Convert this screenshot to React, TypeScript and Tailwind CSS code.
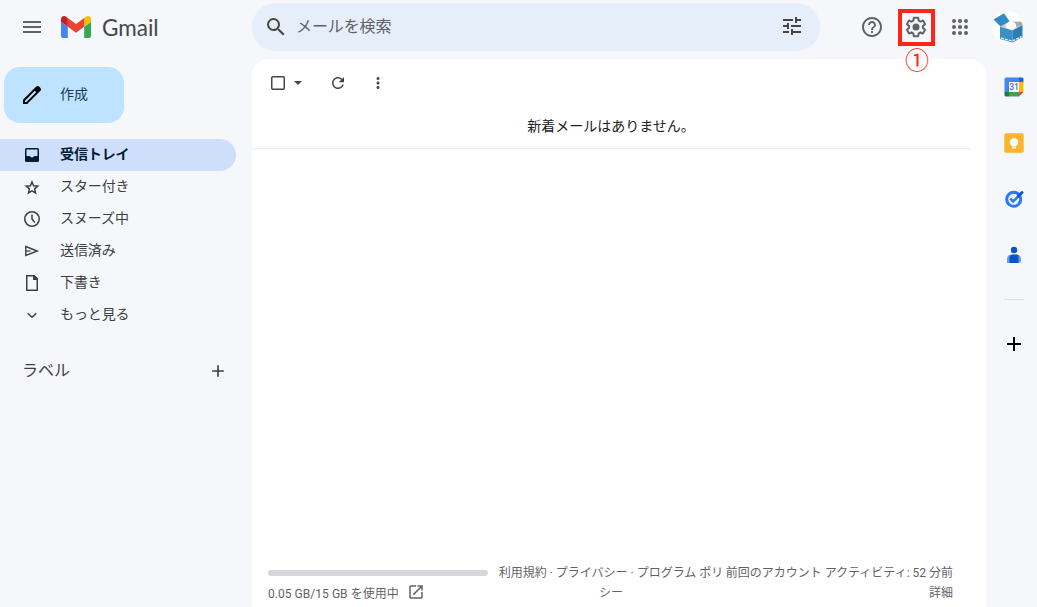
import type { ReactNode } from 'react';
import {
  MdAdd, MdHelpOutline, MdMenu, MdMoreVert, MdOpenInNew, MdRefresh, MdSearch, MdTune,
} from 'react-icons/md';

function Icon20({ children }: { children: ReactNode }) {
  return <svg className="h-5 w-5 shrink-0" viewBox="0 0 20 20" fill="none" stroke="currentColor" strokeWidth="1.5">{children}</svg>;
}

const navItems: { label: string; active?: boolean; icon: ReactNode }[] = [
  {
    label: '受信トレイ', active: true,
    icon: <path fill="currentColor" stroke="none" fillRule="evenodd" d="M4.500 3h11A1.500 1.500 0 0 1 17 4.500v11a1.500 1.500 0 0 1-1.500 1.500h-11A1.500 1.500 0 0 1 3 15.500v-11A1.500 1.500 0 0 1 4.500 3zM4.500 4.500V11H7.700a2.600 2.600 0 0 0 4.600 0H15.500V4.500z" />,
  },
  { label: 'スター付き', icon: <path d="M10 5l1.620 3.800 4.130.36-3.130 2.720.94 4.040L10 13.780l-3.560 2.140.94-4.040-3.130-2.720 4.130-.36z" /> },
  { label: 'スヌーズ中', icon: <><circle cx="10" cy="10" r="7.250" /><path d="M10 5.500V10l2.800 3.400" /></> },
  { label: '送信済み', icon: <><path strokeWidth="1.400" d="M3.750 5.500L15.300 10 3.750 14.500z" /><path strokeWidth="1.300" d="M3.800 10H8.500" /></> },
  { label: '下書き', icon: <><path d="M5 2.750h7l3.250 3.250v11.250H4.750V2.750z" /><path fill="currentColor" stroke="none" d="M11 2h1.500L16 5.500V7h-5z" /></> },
  { label: 'もっと見る', icon: <path d="M5.700 8.200L10 12.300l4.300-4.100" /> },
];

function GmailMark() {
  return (
    <svg className="h-[22px] w-[30px]" viewBox="52 42 88 66" preserveAspectRatio="none">
      <path fill="#4285f4" d="M58 108h14V74L52 59v43c0 3.320 2.690 6 6 6" />
      <path fill="#34a853" d="M120 108h14c3.320 0 6-2.690 6-6V59l-20 15" />
      <path fill="#fbbc04" d="M120 48v26l20-15v-8c0-7.420-8.470-11.650-14.400-7.200" />
      <path fill="#ea4335" d="M72 74V48l24 18 24-18v26L96 92" />
      <path fill="#c5221f" d="M52 51v8l20 15V48l-5.600-4.200c-5.940-4.450-14.400-.22-14.400 7.200" />
    </svg>
  );
}

function Gear() {
  return (
    <svg className="h-6 w-6 shrink-0" viewBox="0 0 24 24" fill="currentColor">
      <path d="M13.850 22.250h-3.700c-.74 0-1.360-.54-1.450-1.270l-.27-1.890c-.27-.14-.53-.29-.79-.46l-1.800.72c-.7.26-1.470-.03-1.810-.65L2.200 15.530c-.35-.66-.2-1.440.36-1.880l1.530-1.190c-.01-.15-.02-.3-.02-.46 0-.15.01-.31.02-.46l-1.520-1.190c-.59-.45-.74-1.260-.37-1.880l1.850-3.190c.34-.62 1.110-.9 1.790-.63l1.810.73c.26-.17.52-.32.78-.46l.27-1.910c.09-.7.71-1.250 1.440-1.250h3.700c.74 0 1.360.54 1.450 1.270l.27 1.890c.27.14.53.29.79.46l1.800-.72c.71-.26 1.480.03 1.820.65l1.840 3.180c.36.66.2 1.440-.36 1.880l-1.520 1.190c.01.15.02.3.02.46s-.01.31-.02.46l1.520 1.190c.56.45.72 1.230.37 1.860l-1.860 3.220c-.34.62-1.110.9-1.800.63l-1.800-.72c-.26.17-.52.32-.78.46l-.27 1.910c-.1.68-.72 1.220-1.460 1.220zm-3.230-2h2.760l.37-2.550.53-.22c.44-.18.88-.44 1.340-.78l.45-.34 2.380.96 1.380-2.400-2.030-1.580.07-.56c.03-.26.06-.51.06-.78s-.03-.53-.06-.78l-.07-.56 2.030-1.580-1.390-2.400-2.390.96-.45-.35c-.42-.32-.87-.58-1.330-.77l-.52-.22-.37-2.550h-2.760l-.37 2.550-.53.21c-.44.19-.88.44-1.340.79l-.45.33-2.380-.95-1.390 2.390 2.030 1.580-.07.56a7 7 0 0 0-.06.79c0 .26.02.53.06.78l.07.56-2.030 1.580 1.380 2.400 2.390-.96.45.35c.43.33.86.58 1.330.77l.53.22.38 2.550z" />
      <circle cx="12" cy="12" r="3.500" />
    </svg>
  );
}

function AppsGrid() {
  const steps = [6, 12, 18];
  return (
    <svg className="h-6 w-6" viewBox="0 0 24 24" fill="currentColor">
      {steps.map((y) => steps.map((x) => <circle key={`${x}-${y}`} cx={x} cy={y} r="2" />))}
    </svg>
  );
}

function Avatar() {
  return (
    <svg className="h-8 w-8" viewBox="0 0 32 32">
      <circle cx="16" cy="16" r="16" fill="#fff" />
      <path fill="#d0d0d0" d="M8 15l7-4 15 2.500-9 6z" />
      <path fill="#a9a9a9" d="M14 11l15-.5 2 3-5 2.500-8-3z" />
      <ellipse cx="19" cy="14.500" rx="5.200" ry="4" fill="#fff" />
      <path fill="#318cc6" d="M1.500 8.500L12 2.200l5.500 8L8.500 15.500z" />
      <path fill="#3790c8" d="M8 15.500L20.500 19.500V31.500L8 28z" />
      <path fill="#2a7eb4" d="M20.500 19.500L30.500 14v12L20.500 31.500z" />
      <path stroke="#d9edf9" strokeWidth="1.300" strokeDasharray="3 1" d="M9 27l11.500 3 9-4.500" fill="none" />
    </svg>
  );
}

function Calendar() {
  return (
    <svg className="h-5 w-5" viewBox="0 0 20 20">
      <path fill="#4285f4" d="M2 .5h14V5H5v10H.5V2A1.500 1.500 0 0 1 2 .5z" />
      <path fill="#1967d2" d="M15 .5h3A1.500 1.500 0 0 1 19.500 2v3H15z" />
      <path fill="#fbbc04" d="M15 5h4.500v10H15z" />
      <path fill="#34a853" d="M5 15h10v4.500H5z" />
      <path fill="#188038" d="M.5 15H5v4.500H2A1.500 1.500 0 0 1 .5 18z" />
      <path fill="#ea4335" d="M15 15h4.500L15 19.500z" />
      <path fill="#fff" d="M5 5h10v10H5z" />
      <text x="10" y="13.200" textAnchor="middle" fill="#3274df" className="font-['Roboto'] text-[8.500px] font-medium">31</text>
    </svg>
  );
}

function Keep() {
  return (
    <svg className="h-5 w-5" viewBox="0 0 20 20">
      <rect x=".3" y=".3" width="19.400" height="19.400" rx="1.500" fill="#fbb52d" />
      <path fill="#fff" d="M10 5a4.200 4.200 0 0 0-2.300 7.700v.9h4.600v-.9A4.200 4.200 0 0 0 10 5zM8 14.300h4v1.300H8z" />
    </svg>
  );
}

function Tasks() {
  return (
    <svg className="h-5 w-5" viewBox="0 0 20 20" fill="none">
      <circle cx="9.700" cy="10.300" r="7" stroke="#2a7af1" strokeWidth="3" />
      <path d="M6.200 9.500l3 3 5-5" stroke="#2a7af1" strokeWidth="2.600" />
      <path d="M14.500 7l3.500-3.500" stroke="#0d55cf" strokeWidth="3" strokeLinecap="round" />
    </svg>
  );
}

function Contacts() {
  return (
    <svg className="h-5 w-5" viewBox="0 0 20 20">
      <circle cx="10" cy="5" r="3.200" fill="#0756c9" />
      <path fill="#669df6" d="M3 18v-4.500A4.500 4.500 0 0 1 7.500 9.500h5A4.500 4.500 0 0 1 17 13.500V16a2 2 0 0 1-2 2z" />
      <path fill="#0756c9" d="M5.500 18v-5a3.500 3.500 0 0 1 3.500-3.500h3a3 3 0 0 1 2.500 1.200V18z" />
    </svg>
  );
}

export default function App() {
  return (
    <div className="flex h-[607px] w-[1037px] flex-col overflow-hidden bg-[#f5f7fb] font-['Roboto','Noto_Sans_CJK_JP',sans-serif] text-[#202124]">
      <header className="flex h-[59px] shrink-0 items-start">
        <div className="flex h-[54px] w-[252px] items-center pl-5">
          <MdMenu className="h-6 w-6 text-[#5f6368]" />
          <div className="ml-[17px] flex items-center gap-[11px]">
            <GmailMark />
            <span className="pt-px font-['Lato',sans-serif] text-[22.500px] leading-6 text-[#444746]">Gmail</span>
          </div>
        </div>
        <div className="mt-[3px] flex h-12 w-[568px] items-center rounded-full bg-[#e6eef9] pr-4 pl-3">
          <MdSearch className="h-6 w-6 text-[#444746]" />
          <span className="ml-2 flex-1 text-base leading-6 tracking-[-0.100px] text-[#5f6368]">メールを検索</span>
          <MdTune className="mb-0.5 h-6 w-6 text-[#444746]" />
        </div>
        <div className="flex h-[54px] items-center pl-10 text-[#5f6368]">
          <MdHelpOutline className="h-6 w-6" />
          <div className="relative ml-[14px] flex h-[37px] w-[37px] items-center border-4 border-[#fc2517] pl-0.5">
            <Gear />
            <span className="absolute top-[34px] left-[3px] font-['Noto_Sans_CJK_JP'] text-[24px] leading-6 text-[#fc2517]">①</span>
          </div>
          <div className="ml-[13px]"><AppsGrid /></div>
          <div className="ml-5"><Avatar /></div>
        </div>
      </header>
      <div className="flex min-h-0 flex-1">
        <aside className="w-[252px] shrink-0 pt-2">
          <button className="ml-1 flex h-14 w-[120px] items-center rounded-2xl bg-[#bde3ff] pl-4 text-sm text-[#1b3a52]">
            <svg className="h-6 w-6" viewBox="0 0 24 24" fill="#000">
              <path d="M20.410 4.940l-1.350-1.350c-.78-.78-2.050-.78-2.830 0L3 16.820V21h4.180L20.410 7.770c.79-.78.79-2.050 0-2.830zm-14 14.120L5 19v-1.360l9.820-9.820 1.410 1.410-9.820 9.830z" />
            </svg>
            <span className="ml-4 pb-0.5">作成</span>
          </button>
          <nav className="mt-4 w-[236px]">
            {navItems.map((item) => (
              <a key={item.label} className={item.active
                ? 'flex h-8 items-center gap-[18px] rounded-r-full bg-[#cfdffb] pl-[22px] text-sm font-bold text-[#001d35]'
                : 'flex h-8 items-center gap-[18px] pl-[22px] text-sm text-[#3c4043]'}>
                <Icon20>{item.icon}</Icon20>
                <span className="pb-[3px] tracking-[-0.100px]">{item.label}</span>
              </a>
            ))}
          </nav>
          <div className="mt-6 flex h-8 w-[228px] items-center justify-between pl-[22px] text-base text-[#3c4043]">
            <span className="pb-px">ラベル</span>
            <MdAdd className="h-5 w-5" />
          </div>
        </aside>
        <main className="flex w-[734px] shrink-0 flex-col rounded-t-2xl bg-white">
          <div className="flex h-12 shrink-0 items-center pl-4 text-[#444746]">
            <Icon20><rect x="3.750" y="3.750" width="12.500" height="12.500" rx="1" /></Icon20>
            <Icon20><path fill="currentColor" stroke="none" d="M6 8h8L10 12z" /></Icon20>
            <MdRefresh className="ml-[21px] h-[18px] w-[18px]" />
            <MdMoreVert className="ml-[22px] h-[18px] w-[18px]" />
          </div>
          <div className="mr-[15px] flex h-[42px] shrink-0 items-center justify-center border-b border-[#e7eaef] pb-1 text-sm"><span className="-ml-px">新着メールはありません。</span></div>
          <footer className="mt-auto flex h-[46px] items-start pl-4 text-xs leading-5 text-[#5f6368]">
            <div className="w-[220px]">
              <div className="mt-[9px] h-1.5 rounded-full bg-[#d5d7db]" />
              <div className="mt-1.5 flex h-5 items-center gap-2">
                <span className="pt-[3px] tracking-[0.040px]">0.05 GB/15 GB を使用中</span>
                <MdOpenInNew className="h-[18px] w-[18px]" />
              </div>
            </div>
            <p className="ml-2.5 w-[226px] pt-0.5 text-center whitespace-nowrap">利用規約 · プライバシー · プログラム ポリ<br />シー</p>
            <p className="w-[229px] pt-0.5 text-right whitespace-nowrap">前回のアカウント アクティビティ: 52 分前<br />詳細</p>
          </footer>
        </main>
        <aside className="flex w-[51px] flex-col items-center gap-9 pt-[18px] pl-[5px]">
          <Calendar />
          <Keep />
          <Tasks />
          <Contacts />
          <div className="-mt-[2px] h-px w-5 bg-[#dddfdd]" />
          <MdAdd className="-mt-[4px] h-6 w-6 text-black" />
        </aside>
      </div>
    </div>
  );
}
